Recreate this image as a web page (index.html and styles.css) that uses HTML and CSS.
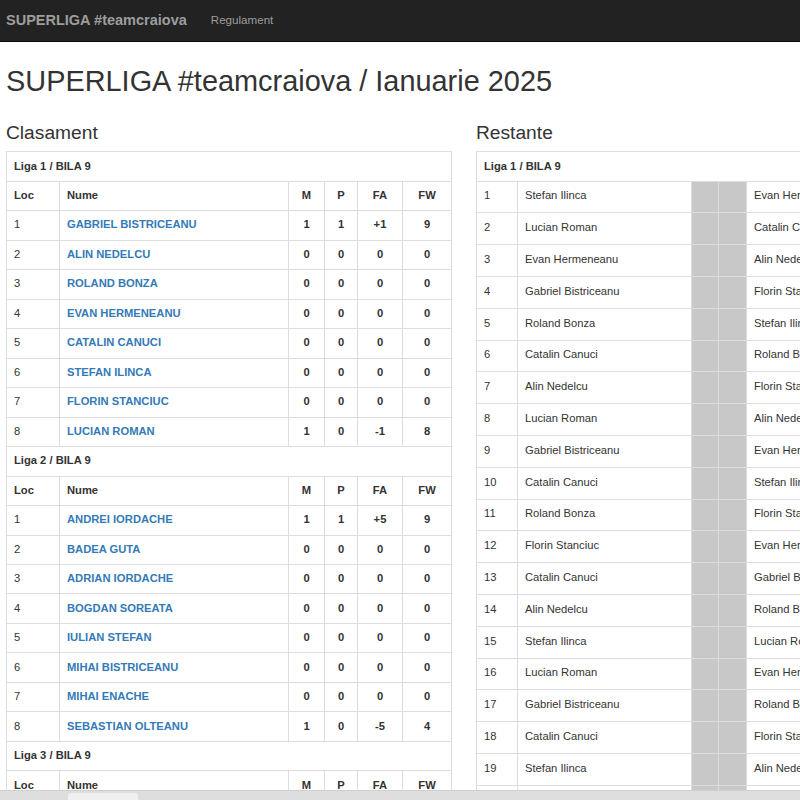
FILE: index.html
```html
<!DOCTYPE html>
<html lang="ro">
<head>
<meta charset="utf-8">
<title>SUPERLIGA #teamcraiova</title>
<link rel="stylesheet" href="styles.css">
</head>
<body>
<nav class="navbar">
  <a class="brand" href="#">SUPERLIGA #teamcraiova</a>
  <a class="nav-link" href="#">Regulament</a>
</nav>
<main class="page">
  <h1 class="title">SUPERLIGA #teamcraiova / Ianuarie 2025</h1>
  <div class="cols">
    <section class="col">
      <h3 class="section-title">Clasament</h3>
      <table class="tbl standings">
        <colgroup><col class="c-loc"><col class="c-name"><col class="c-m"><col class="c-p"><col class="c-fa"><col class="c-fw"></colgroup>
        <tbody>
          <tr class="liga"><td colspan="6">Liga 1 / BILA 9</td></tr>
          <tr class="head"><td>Loc</td><td>Nume</td><td class="num">M</td><td class="num">P</td><td class="num">FA</td><td class="num">FW</td></tr>
          <tr><td>1</td><td><a href="#">GABRIEL BISTRICEANU</a></td><td class="num">1</td><td class="num">1</td><td class="num">+1</td><td class="num">9</td></tr>
          <tr><td>2</td><td><a href="#">ALIN NEDELCU</a></td><td class="num">0</td><td class="num">0</td><td class="num">0</td><td class="num">0</td></tr>
          <tr><td>3</td><td><a href="#">ROLAND BONZA</a></td><td class="num">0</td><td class="num">0</td><td class="num">0</td><td class="num">0</td></tr>
          <tr><td>4</td><td><a href="#">EVAN HERMENEANU</a></td><td class="num">0</td><td class="num">0</td><td class="num">0</td><td class="num">0</td></tr>
          <tr><td>5</td><td><a href="#">CATALIN CANUCI</a></td><td class="num">0</td><td class="num">0</td><td class="num">0</td><td class="num">0</td></tr>
          <tr><td>6</td><td><a href="#">STEFAN ILINCA</a></td><td class="num">0</td><td class="num">0</td><td class="num">0</td><td class="num">0</td></tr>
          <tr><td>7</td><td><a href="#">FLORIN STANCIUC</a></td><td class="num">0</td><td class="num">0</td><td class="num">0</td><td class="num">0</td></tr>
          <tr><td>8</td><td><a href="#">LUCIAN ROMAN</a></td><td class="num">1</td><td class="num">0</td><td class="num">-1</td><td class="num">8</td></tr>
          <tr class="liga"><td colspan="6">Liga 2 / BILA 9</td></tr>
          <tr class="head"><td>Loc</td><td>Nume</td><td class="num">M</td><td class="num">P</td><td class="num">FA</td><td class="num">FW</td></tr>
          <tr><td>1</td><td><a href="#">ANDREI IORDACHE</a></td><td class="num">1</td><td class="num">1</td><td class="num">+5</td><td class="num">9</td></tr>
          <tr><td>2</td><td><a href="#">BADEA GUTA</a></td><td class="num">0</td><td class="num">0</td><td class="num">0</td><td class="num">0</td></tr>
          <tr><td>3</td><td><a href="#">ADRIAN IORDACHE</a></td><td class="num">0</td><td class="num">0</td><td class="num">0</td><td class="num">0</td></tr>
          <tr><td>4</td><td><a href="#">BOGDAN SOREATA</a></td><td class="num">0</td><td class="num">0</td><td class="num">0</td><td class="num">0</td></tr>
          <tr><td>5</td><td><a href="#">IULIAN STEFAN</a></td><td class="num">0</td><td class="num">0</td><td class="num">0</td><td class="num">0</td></tr>
          <tr><td>6</td><td><a href="#">MIHAI BISTRICEANU</a></td><td class="num">0</td><td class="num">0</td><td class="num">0</td><td class="num">0</td></tr>
          <tr><td>7</td><td><a href="#">MIHAI ENACHE</a></td><td class="num">0</td><td class="num">0</td><td class="num">0</td><td class="num">0</td></tr>
          <tr><td>8</td><td><a href="#">SEBASTIAN OLTEANU</a></td><td class="num">1</td><td class="num">0</td><td class="num">-5</td><td class="num">4</td></tr>
          <tr class="liga"><td colspan="6">Liga 3 / BILA 9</td></tr>
          <tr class="head"><td>Loc</td><td>Nume</td><td class="num">M</td><td class="num">P</td><td class="num">FA</td><td class="num">FW</td></tr>
          <tr><td>1</td><td><a href="#">&nbsp;</a></td><td class="num">0</td><td class="num">0</td><td class="num">0</td><td class="num">0</td></tr>
        </tbody>
      </table>
    </section>
    <section class="col">
      <h3 class="section-title">Restante</h3>
      <table class="tbl pending">
        <colgroup><col class="r-no"><col class="r-name"><col class="r-score"><col class="r-score2"><col class="r-name2"></colgroup>
        <tbody>
          <tr class="liga"><td colspan="5">Liga 1 / BILA 9</td></tr>
          <tr><td>1</td><td>Stefan Ilinca</td><td class="score"></td><td class="score"></td><td>Evan Hermeneanu</td></tr>
          <tr><td>2</td><td>Lucian Roman</td><td class="score"></td><td class="score"></td><td>Catalin Canuci</td></tr>
          <tr><td>3</td><td>Evan Hermeneanu</td><td class="score"></td><td class="score"></td><td>Alin Nedelcu</td></tr>
          <tr><td>4</td><td>Gabriel Bistriceanu</td><td class="score"></td><td class="score"></td><td>Florin Stanciuc</td></tr>
          <tr><td>5</td><td>Roland Bonza</td><td class="score"></td><td class="score"></td><td>Stefan Ilinca</td></tr>
          <tr><td>6</td><td>Catalin Canuci</td><td class="score"></td><td class="score"></td><td>Roland Bonza</td></tr>
          <tr><td>7</td><td>Alin Nedelcu</td><td class="score"></td><td class="score"></td><td>Florin Stanciuc</td></tr>
          <tr><td>8</td><td>Lucian Roman</td><td class="score"></td><td class="score"></td><td>Alin Nedelcu</td></tr>
          <tr><td>9</td><td>Gabriel Bistriceanu</td><td class="score"></td><td class="score"></td><td>Evan Hermeneanu</td></tr>
          <tr><td>10</td><td>Catalin Canuci</td><td class="score"></td><td class="score"></td><td>Stefan Ilinca</td></tr>
          <tr><td>11</td><td>Roland Bonza</td><td class="score"></td><td class="score"></td><td>Florin Stanciuc</td></tr>
          <tr><td>12</td><td>Florin Stanciuc</td><td class="score"></td><td class="score"></td><td>Evan Hermeneanu</td></tr>
          <tr><td>13</td><td>Catalin Canuci</td><td class="score"></td><td class="score"></td><td>Gabriel Bistriceanu</td></tr>
          <tr><td>14</td><td>Alin Nedelcu</td><td class="score"></td><td class="score"></td><td>Roland Bonza</td></tr>
          <tr><td>15</td><td>Stefan Ilinca</td><td class="score"></td><td class="score"></td><td>Lucian Roman</td></tr>
          <tr><td>16</td><td>Lucian Roman</td><td class="score"></td><td class="score"></td><td>Evan Hermeneanu</td></tr>
          <tr><td>17</td><td>Gabriel Bistriceanu</td><td class="score"></td><td class="score"></td><td>Roland Bonza</td></tr>
          <tr><td>18</td><td>Catalin Canuci</td><td class="score"></td><td class="score"></td><td>Florin Stanciuc</td></tr>
          <tr><td>19</td><td>Stefan Ilinca</td><td class="score"></td><td class="score"></td><td>Alin Nedelcu</td></tr>
          <tr><td>20</td><td>Roland Bonza</td><td class="score"></td><td class="score"></td><td>Lucian Roman</td></tr>
        </tbody>
      </table>
    </section>
  </div>
</main>
<div class="hscroll"><div class="hscroll-thumb"></div></div>
</body>
</html>
```

FILE: styles.css
```css
html, body {
  margin: 0;
  padding: 0;
  overflow: hidden;
  height: 100%;
}
body {
  font-family: "Liberation Sans", Arial, Helvetica, sans-serif;
  font-size: 11.2px;
  line-height: 16.5px;
  color: #333;
  background: #fff;
}
a { text-decoration: none; }

.navbar {
  height: 41px;
  background: #222;
  border-bottom: 1px solid #080808;
  display: flex;
  align-items: center;
  padding: 0 6px;
  box-sizing: content-box;
}
.brand {
  color: #9d9d9d;
  font-size: 14.5px;
  font-weight: bold;
  margin-right: 24px;
}
.nav-link {
  color: #9d9d9d;
  font-size: 11.6px;
}

.page {
  width: 915px;
  padding: 0 6px;
}
.title {
  font-size: 28.9px;
  font-weight: 500;
  line-height: 31.7px;
  margin: 24px 0 24px;
}
.cols {
  display: grid;
  grid-template-columns: 445px 445px;
  column-gap: 25px;
}
.section-title {
  font-size: 19.2px;
  font-weight: 500;
  line-height: 21px;
  margin: 0 0 8.5px;
}

.tbl {
  width: 445px;
  border-collapse: collapse;
  table-layout: fixed;
  border: 1px solid #ddd;
}
.tbl td {
  border-top: 1px solid #ddd;
  padding: 5.3px 7px 6.7px;
  white-space: nowrap;
  overflow: hidden;
}
.standings td + td { border-left: 1px solid #ddd; }
.standings .liga td, .pending .liga td { font-weight: bold; }
.standings .head td { font-weight: bold; }
.standings td a { color: #337ab7; font-weight: bold; }
.standings .num { text-align: center; font-weight: bold; }

.c-loc { width: 53px; }
.c-name { width: 229px; }
.c-m { width: 36px; }
.c-p { width: 33px; }
.c-fa { width: 45px; }
.c-fw { width: 49px; }

.pending td { padding: 5.8px 7px 8.5px; vertical-align: top; }
.pending .liga td { padding: 5.3px 7px 6.7px; }
.pending tr:not(.liga) td + td { border-left: 1px solid #ddd; }
.pending td.score { background: #c8c8c8; border-left-color: #d6d6d6; }
.r-no { width: 41px; }
.r-name { width: 174px; }
.r-score { width: 27px; }
.r-score2 { width: 28px; }
.r-name2 { width: 175px; }

.hscroll {
  position: fixed;
  left: 0;
  right: 0;
  bottom: 0;
  height: 9px;
  background: #dedede;
  border-top: 1px solid #cfcfcf;
}
.hscroll-thumb {
  position: absolute;
  left: 68px;
  top: 2px;
  width: 70px;
  height: 7px;
  border-radius: 3px 3px 0 0;
  background: #f0f0f0;
}
```
